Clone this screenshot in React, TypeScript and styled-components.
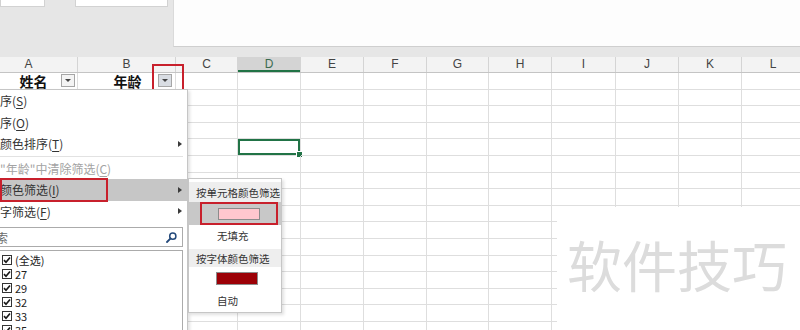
import React from 'react'
import styled, { createGlobalStyle } from 'styled-components'

const GlobalStyle = createGlobalStyle`
  html, body {
    margin: 0;
    padding: 0;
    background: #ffffff;
  }
  body {
    font-family: 'Noto Sans CJK SC', 'Noto Sans', sans-serif;
  }
`

const COLUMNS = [
  { label: 'A', width: 98 },
  { label: 'B', width: 98 },
  { label: 'C', width: 62 },
  { label: 'D', width: 63 },
  { label: 'E', width: 63 },
  { label: 'F', width: 63 },
  { label: 'G', width: 62 },
  { label: 'H', width: 63 },
  { label: 'I', width: 64 },
  { label: 'J', width: 63 },
  { label: 'K', width: 63 },
  { label: 'L', width: 63 },
]

const ROW_COUNT = 16
const SELECTED = { row: 4, col: 3 }

const Page = styled.div`
  position: relative;
  width: 800px;
  height: 330px;
  overflow: hidden;
  background: #ffffff;
`

const TopArea = styled.div`
  display: flex;
  height: 57px;
  background: #e6e6e6;
`

const ToolStrip = styled.div`
  display: flex;
  align-items: flex-start;
  width: 173px;
  flex: none;
`

const NameBox = styled.div<{ $width: number; $gap: number }>`
  width: ${p => p.$width}px;
  height: 7px;
  margin-left: ${p => p.$gap}px;
  background: #ffffff;
  border: 1px solid #d2d2d2;
  border-top: 0;
  box-sizing: border-box;
`

const FormulaPanel = styled.div`
  flex: 1;
  height: 47px;
  background: #fdfdfd;
  border-left: 1px solid #dadada;
  border-bottom: 1px solid #cfcfcf;
  box-sizing: border-box;
`

const Sheet = styled.div`
  margin-left: -20px;
`

const HeaderRow = styled.div`
  display: flex;
  height: 16px;
  background: #f3f3f3;
  border-bottom: 1px solid #c4c4c4;
  box-sizing: border-box;
`

const HeaderCell = styled.div<{ $width: number; $active?: boolean }>`
  width: ${p => p.$width}px;
  flex: none;
  box-sizing: border-box;
  border-right: 1px solid #d4d4d4;
  text-align: center;
  font: 12px/15px 'Liberation Sans', Arial, sans-serif;
  color: ${p => (p.$active ? '#3b6b50' : '#444444')};
  background: ${p => (p.$active ? '#d4d4d4' : 'transparent')};
  box-shadow: ${p => (p.$active ? 'inset 0 -2px 0 #217346' : 'none')};
`

const Row = styled.div`
  display: flex;
  height: 16.6px;
`

const Cell = styled.div<{ $width: number; $selected?: boolean }>`
  position: relative;
  display: flex;
  align-items: center;
  width: ${p => p.$width}px;
  flex: none;
  box-sizing: border-box;
  border-right: 1px solid #dedede;
  border-bottom: 1px solid #dedede;
  box-shadow: ${p => (p.$selected ? 'inset 0 0 0 2px #217346' : 'none')};

  ${p =>
    p.$selected &&
    `
    &::after {
      content: '';
      position: absolute;
      right: -3px;
      bottom: -3px;
      width: 5px;
      height: 5px;
      background: #217346;
      border: 1px solid #ffffff;
    }
  `}
`

const HeadLabel = styled.span<{ $shift: number }>`
  flex: 1;
  padding-left: ${p => p.$shift}px;
  text-align: center;
  font-size: 14px;
  font-weight: 700;
  line-height: 16px;
  color: #111111;
`

const FilterButton = styled.span<{ $active?: boolean }>`
  display: flex;
  align-items: center;
  justify-content: center;
  width: 14px;
  height: 13px;
  margin-right: ${p => (p.$active ? 3 : 2)}px;
  box-sizing: border-box;
  border: 1px solid #a6a6a6;
  background: ${p => (p.$active ? '#d9dde3' : '#f4f4f4')};
`

const DownTriangle = styled.span`
  width: 0;
  height: 0;
  border-left: 3px solid transparent;
  border-right: 3px solid transparent;
  border-top: 3px solid #444444;
`

const RedMark = styled.div<{ $left: number; $top: number; $width: number; $height: number }>`
  position: absolute;
  left: ${p => p.$left}px;
  top: ${p => p.$top}px;
  width: ${p => p.$width}px;
  height: ${p => p.$height}px;
  border: 2px solid #c8202c;
  box-sizing: border-box;
  pointer-events: none;
`

const FilterMenu = styled.div`
  position: absolute;
  left: -40px;
  top: 89px;
  width: 228px;
  height: 260px;
  box-sizing: border-box;
  background: #ffffff;
  border: 1px solid #c6c6c6;
  box-shadow: 2px 2px 3px rgba(0, 0, 0, 0.12);
`

const MenuItem = styled.div<{ $disabled?: boolean; $active?: boolean }>`
  display: flex;
  align-items: center;
  height: 21.5px;
  padding: 0 5px 0 27px;
  font-size: 12px;
  color: ${p => (p.$disabled ? '#a3a3a3' : '#333333')};
  background: ${p => (p.$active ? '#c6c6c6' : 'transparent')};
  white-space: nowrap;

  u {
    text-decoration: underline;
    text-underline-offset: 2px;
  }
`

const SubArrow = styled.span`
  margin-left: auto;
  width: 0;
  height: 0;
  border-top: 3.5px solid transparent;
  border-bottom: 3.5px solid transparent;
  border-left: 4px solid #3a3a3a;
`

const MenuSeparator = styled.div`
  height: 1px;
  margin: 1px 4px 1px 26px;
  background: #e2e2e2;
`

const SearchBox = styled.div`
  display: flex;
  align-items: center;
  height: 20px;
  margin: 5px 4px 0 17px;
  padding: 0 5px 0 5px;
  box-sizing: border-box;
  border: 1px solid #ababab;
  font-size: 12px;
  color: #6b6b6b;
`

const SearchIcon = styled.svg`
  margin-left: auto;
`

const ValueList = styled.div`
  height: 90px;
  margin: 3px 4px 0 17px;
  padding: 2px 0 0 23px;
  box-sizing: border-box;
  border: 1px solid #ababab;
`

const ValueItem = styled.div`
  display: flex;
  align-items: center;
  gap: 3px;
  height: 14px;
  font-size: 11px;
  line-height: 14px;
  color: #222222;
`

const CheckBox = styled.span`
  display: flex;
  align-items: center;
  justify-content: center;
  width: 10px;
  height: 10px;
  box-sizing: border-box;
  border: 1px solid #333333;
  background: #ffffff;
`

const SubMenu = styled.div`
  position: absolute;
  left: 188px;
  top: 178px;
  width: 94px;
  height: 135px;
  box-sizing: border-box;
  padding-top: 3px;
  background: #ffffff;
  border: 1px solid #c6c6c6;
  box-shadow: 2px 2px 3px rgba(0, 0, 0, 0.12);
`

const SubHeader = styled.div<{ $height: number; $gap?: number }>`
  height: ${p => p.$height}px;
  margin-top: ${p => p.$gap || 0}px;
  padding-left: 7px;
  display: flex;
  align-items: center;
  background: #eeeeee;
  font-size: 10.5px;
  color: #333333;
  white-space: nowrap;
`

const SwatchRow = styled.div<{ $active?: boolean; $height: number }>`
  display: flex;
  align-items: center;
  height: ${p => p.$height}px;
  padding-left: ${p => (p.$active ? 11 : 27)}px;
  background: ${p => (p.$active ? '#c8c8c8' : 'transparent')};
`

const SwatchFrame = styled.div`
  display: flex;
  align-items: center;
  justify-content: center;
  width: 78px;
  height: 23px;
  box-sizing: border-box;
  border: 2px solid #c8202c;
`

const Swatch = styled.span<{ $color: string; $height: number }>`
  width: 42px;
  height: ${p => p.$height}px;
  box-sizing: border-box;
  border: 1px solid #8c8c8c;
  background: ${p => p.$color};
`

const SubText = styled.div<{ $height: number }>`
  height: ${p => p.$height}px;
  padding-left: 28px;
  display: flex;
  align-items: center;
  font-size: 10.5px;
  color: #333333;
`

const Watermark = styled.div`
  position: absolute;
  left: 557px;
  top: 207px;
  right: 0;
  bottom: 0;
  padding: 29px 0 0 10px;
  background: #ffffff;
  font-size: 55px;
  line-height: 1;
  color: #dcdcdc;
  white-space: nowrap;
`

const MENU_ITEMS = [
  { text: '升序', key: 'S' },
  { text: '降序', key: 'O' },
  { text: '按颜色排序', key: 'T', sub: true },
]

const LOWER_ITEMS = [
  { text: '从"年龄"中清除筛选', key: 'C', disabled: true },
  { text: '按颜色筛选', key: 'I', sub: true, active: true },
  { text: '数字筛选', key: 'F', sub: true },
]

const VALUES = ['(全选)', '27', '29', '32', '33', '35']

const Check = () => (
  <svg width="8" height="8" viewBox="0 0 8 8">
    <polyline points="1,4.2 3,6.3 7,1.5" fill="none" stroke="#1a1a1a" strokeWidth="1.7" />
  </svg>
)

const renderItem = (item: { text: string; key: string; sub?: boolean; disabled?: boolean; active?: boolean }) => (
  <MenuItem key={item.key} $disabled={item.disabled} $active={item.active}>
    {item.text}(<u>{item.key}</u>)
    {item.sub && <SubArrow />}
  </MenuItem>
)

const App = () => {
  return (
    <Page>
      <GlobalStyle />
      <TopArea>
        <ToolStrip>
          <NameBox $width={45} $gap={0} />
          <NameBox $width={93} $gap={30} />
        </ToolStrip>
        <FormulaPanel />
      </TopArea>

      <Sheet>
        <HeaderRow>
          {COLUMNS.map((c, i) => (
            <HeaderCell key={c.label} $width={c.width} $active={i === SELECTED.col}>
              {c.label}
            </HeaderCell>
          ))}
        </HeaderRow>
        {Array.from({ length: ROW_COUNT }).map((_, r) => (
          <Row key={r}>
            {COLUMNS.map((c, i) => (
              <Cell key={c.label} $width={c.width} $selected={r === SELECTED.row && i === SELECTED.col}>
                {r === 0 && i === 0 && (
                  <>
                    <HeadLabel $shift={26}>姓名</HeadLabel>
                    <FilterButton>
                      <DownTriangle />
                    </FilterButton>
                  </>
                )}
                {r === 0 && i === 1 && (
                  <>
                    <HeadLabel $shift={19}>年龄</HeadLabel>
                    <FilterButton $active>
                      <DownTriangle />
                    </FilterButton>
                  </>
                )}
              </Cell>
            ))}
          </Row>
        ))}
      </Sheet>

      <RedMark $left={152} $top={64} $width={32} $height={28} />

      <FilterMenu>
        {MENU_ITEMS.map(renderItem)}
        <MenuSeparator />
        {LOWER_ITEMS.map(renderItem)}
        <SearchBox>
          搜索
          <SearchIcon width="11" height="11" viewBox="0 0 11 11">
            <circle cx="6.8" cy="4.2" r="3.1" fill="none" stroke="#24497a" strokeWidth="1.5" />
            <line x1="4.6" y1="6.4" x2="1" y2="10" stroke="#24497a" strokeWidth="1.8" strokeLinecap="round" />
          </SearchIcon>
        </SearchBox>
        <ValueList>
          {VALUES.map(v => (
            <ValueItem key={v}>
              <CheckBox>
                <Check />
              </CheckBox>
              {v}
            </ValueItem>
          ))}
        </ValueList>
      </FilterMenu>

      <RedMark $left={0} $top={178} $width={108} $height={24} />

      <SubMenu>
        <SubHeader $height={20}>按单元格颜色筛选</SubHeader>
        <SwatchRow $active $height={23}>
          <SwatchFrame>
            <Swatch $color="#ffc7ce" $height={12} />
          </SwatchFrame>
        </SwatchRow>
        <SubText $height={20}>无填充</SubText>
        <SubHeader $height={18} $gap={4}>
          按字体颜色筛选
        </SubHeader>
        <SwatchRow $height={22}>
          <Swatch $color="#9c0006" $height={13} />
        </SwatchRow>
        <SubText $height={22}>自动</SubText>
      </SubMenu>

      <Watermark>软件技巧</Watermark>
    </Page>
  )
}

export default App
